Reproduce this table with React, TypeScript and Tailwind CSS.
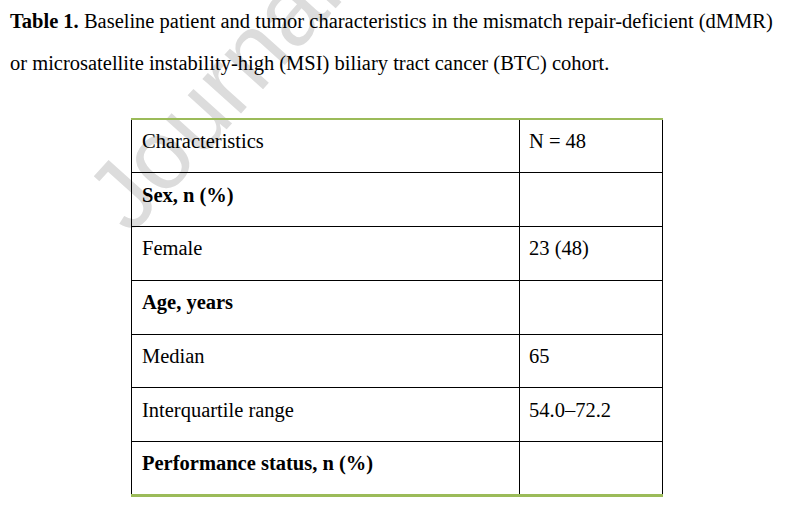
import * as React from "react";

const rows: { label: string; value: string; bold?: boolean }[] = [
  { label: "Characteristics", value: "N = 48" },
  { label: "Sex, n (%)", value: "", bold: true },
  { label: "Female", value: "23 (48)" },
  { label: "Age, years", value: "", bold: true },
  { label: "Median", value: "65" },
  { label: "Interquartile range", value: "54.0–72.2" },
  { label: "Performance status, n (%)", value: "", bold: true },
];

export default function App() {
  return (
    <div className="relative h-[507px] w-[792px] overflow-hidden bg-white font-['Liberation_Serif',serif] text-[20.5px] text-black">
      {/* watermark, sits behind the page text */}
      <span className="pointer-events-none absolute left-[142px] top-[148px] origin-bottom-left -rotate-[48deg] select-none font-['Liberation_Sans',sans-serif] text-[98px] leading-none text-[#dcdcdc]">
        Journal
      </span>

      <div className="relative">
        <p className="whitespace-nowrap px-[10px] leading-[42px]">
          <b>Table 1.</b> Baseline patient and tumor characteristics in the mismatch repair-deficient (dMMR)
          <br />
          or microsatellite instability-high (MSI) biliary tract cancer (BTC) cohort.
        </p>

        <table className="ml-[131px] mt-[34px] w-[531px] table-fixed border-collapse">
          <colgroup>
            <col className="w-[388px]" />
            <col className="w-[143px]" />
          </colgroup>
          <tbody>
            {rows.map((row, i) => {
              const first = i === 0;
              const last = i === rows.length - 1;
              return (
                <tr
                  key={row.label}
                  className={
                    first
                      ? "border-t-2 border-t-[#9bbb59]"
                      : last
                        ? "border-b-[3px] border-b-[#9bbb59]"
                        : ""
                  }
                >
                  <td
                    className={`h-[53.8px] border-x border-black px-[10px] pb-[10px] align-middle leading-[22px] ${
                      !first ? "border-t border-t-black" : ""
                    } ${row.bold ? "font-bold" : ""}`}
                  >
                    {row.label}
                  </td>
                  <td
                    className={`h-[53.8px] border-x border-black px-[9px] pb-[10px] align-middle leading-[22px] ${
                      !first ? "border-t border-t-black" : ""
                    }`}
                  >
                    {row.value}
                  </td>
                </tr>
              );
            })}
          </tbody>
        </table>
      </div>
    </div>
  );
}
